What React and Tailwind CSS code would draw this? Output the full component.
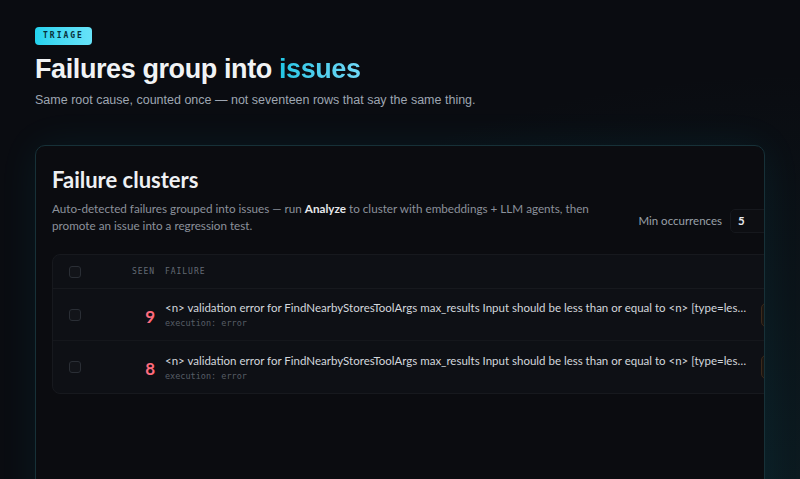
import React from 'react'

const rows = [
  { seen: 9, text: '<n> validation error for FindNearbyStoresToolArgs max_results Input should be less than or equal to <n> [type=less_than_equal, input_value=25, input_type=int]' },
  { seen: 8, text: '<n> validation error for FindNearbyStoresToolArgs max_results Input should be less than or equal to <n> [type=less_than_equal, input_value=50, input_type=int]' },
]

function Box() {
  return <div className="w-3 h-3 rounded-[3px] border border-[#2a2e35] bg-[#121419]" />
}

export default function App() {
  const sans = { fontFamily: 'Lato, "Noto Sans", sans-serif' }
  const mono = { fontFamily: '"DejaVu Sans Mono", "Liberation Mono", monospace' }

  return (
    <div className="w-[800px] h-[479px] overflow-hidden bg-[#0a0c11] bg-[radial-gradient(ellipse_at_100%_100%,rgba(20,90,100,0.18),transparent_60%)] px-[35px] pt-[27px]" style={{ fontFamily: '"Liberation Sans", Arial, sans-serif' }}>
      {/* Hero */}
      <div className="w-fit rounded-[4px] bg-gradient-to-r from-[#22d3ee] to-[#67e3f9] px-[8px] py-[4px] text-[8px] font-bold tracking-[0.25em] text-[#08303a] leading-[10px]" style={mono}>
        TRIAGE
      </div>
      <h1 className="mt-[7px] text-[27px] font-bold leading-[34px] tracking-[-0.015em] text-[#f1f3f5]">
        Failures group into{' '}
        <span className="bg-gradient-to-r from-[#1fc6e4] to-[#6fd8f7] bg-clip-text text-transparent">issues</span>
      </h1>
      <p className="mt-[5px] text-[12.5px] leading-[18px] text-[#9ea6b2]">
        Same root cause, counted once — not seventeen rows that say the same thing.
      </p>

      {/* Panel */}
      <div className="mt-[36px] h-[400px] overflow-hidden rounded-[10px] border border-[#173138] bg-[#0b0c10] shadow-[0_0_40px_rgba(34,211,238,0.07)] px-[16px] pt-[20px]" style={sans}>
        <h2 className="text-[22px] font-bold leading-[28px] text-[#eef0f3]">Failure clusters</h2>
        <div className="mt-[6px] flex items-center justify-between">
          <p className="w-[560px] text-[11.7px] leading-[17px] text-[#8b919b]">
            Auto-detected failures grouped into issues — run <span className="font-bold text-[#e6e8eb]">Analyze</span> to cluster with embeddings + LLM agents, then promote an issue into a regression test.
          </p>
          <div className="mr-[-42px] mt-[8px] flex items-center gap-[8px]">
            <span className="text-[11.5px] text-[#9aa0a9]">Min occurrences</span>
            <div className="h-[24px] w-[60px] rounded-[5px] border border-[#16181d] bg-[#0d0e12] px-[7px] text-[11.5px] font-bold leading-[22px] text-[#e8eaed]">5</div>
          </div>
        </div>

        {/* Table */}
        <div className="mt-[20px] w-[780px] rounded-[8px] border border-[#17191e] bg-[#0e1015]">
          <div className="flex h-[34px] items-center border-b border-[#17191e] text-[8px] tracking-[0.12em] text-[#636a74]" style={mono}>
            <div className="w-[40px] pl-[16px]"><Box /></div>
            <div className="w-[62px] text-right">SEEN</div>
            <div className="w-[608px] pl-[10px]">FAILURE</div>
            <div className="pl-[2px] text-[#3a3f47]">S</div>
          </div>
          {rows.map((r, i) => (
            <div key={i} className={`flex h-[52px] items-center ${i === 0 ? 'border-b border-[#15171c]' : ''}`}>
              <div className="w-[40px] pl-[16px]"><Box /></div>
              <div className="w-[62px] pt-[4px] text-right text-[17px] font-bold text-[#ff6b7d]">{r.seen}</div>
              <div className="w-[608px] pl-[10px] pr-[12px] min-w-0">
                <div className="truncate text-[11.5px] leading-[16px] text-[#d3d7dd]">{r.text}</div>
                <div className="mt-[1px] text-[8.5px] leading-[12px] text-[#575d66]" style={mono}>execution: error</div>
              </div>
              <div className="ml-[-2px] h-[24px] w-[40px] rounded-[5px] border border-[#3a2a1c] bg-[#1c1611]" />
            </div>
          ))}
        </div>
      </div>
    </div>
  )
}
